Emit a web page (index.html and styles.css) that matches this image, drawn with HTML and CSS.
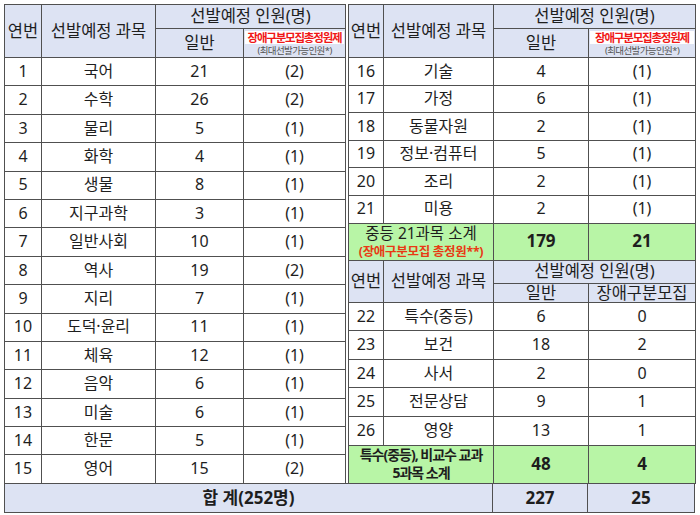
FILE: index.html
```html
<!DOCTYPE html>
<html lang="ko">
<head>
<meta charset="utf-8">
<link rel="stylesheet" href="styles.css">
</head>
<body>
<div class="sheet">
  <div class="halves">
    <table class="t left">
      <colgroup><col class="c1"><col class="c2"><col class="c3"><col class="c4"></colgroup>
      <tr class="h1">
        <th rowspan="2">연번</th><th rowspan="2">선발예정 과목</th><th colspan="2">선발예정 인원(명)</th>
      </tr>
      <tr class="h2">
        <th>일반</th>
        <th class="red-head"><span class="rh1">장애구분모집총정원제</span><span class="rh2">(최대선발가능인원*)</span></th>
      </tr>
      <tr><td>1</td><td>국어</td><td>21</td><td>(2)</td></tr>
      <tr><td>2</td><td>수학</td><td>26</td><td>(2)</td></tr>
      <tr><td>3</td><td>물리</td><td>5</td><td>(1)</td></tr>
      <tr><td>4</td><td>화학</td><td>4</td><td>(1)</td></tr>
      <tr><td>5</td><td>생물</td><td>8</td><td>(1)</td></tr>
      <tr><td>6</td><td>지구과학</td><td>3</td><td>(1)</td></tr>
      <tr><td>7</td><td>일반사회</td><td>10</td><td>(1)</td></tr>
      <tr><td>8</td><td>역사</td><td>19</td><td>(2)</td></tr>
      <tr><td>9</td><td>지리</td><td>7</td><td>(1)</td></tr>
      <tr><td>10</td><td>도덕·윤리</td><td>11</td><td>(1)</td></tr>
      <tr><td>11</td><td>체육</td><td>12</td><td>(1)</td></tr>
      <tr><td>12</td><td>음악</td><td>6</td><td>(1)</td></tr>
      <tr><td>13</td><td>미술</td><td>6</td><td>(1)</td></tr>
      <tr><td>14</td><td>한문</td><td>5</td><td>(1)</td></tr>
      <tr><td>15</td><td>영어</td><td>15</td><td>(2)</td></tr>
    </table>
    <table class="t right">
      <colgroup><col class="d1"><col class="d2"><col class="d3"><col class="d4"></colgroup>
      <tr class="h1">
        <th rowspan="2">연번</th><th rowspan="2">선발예정 과목</th><th colspan="2">선발예정 인원(명)</th>
      </tr>
      <tr class="h2">
        <th>일반</th>
        <th class="red-head"><span class="rh1">장애구분모집총정원제</span><span class="rh2">(최대선발가능인원*)</span></th>
      </tr>
      <tr class="ra"><td>16</td><td>기술</td><td>4</td><td>(1)</td></tr>
      <tr class="ra"><td>17</td><td>가정</td><td>6</td><td>(1)</td></tr>
      <tr class="ra"><td>18</td><td>동물자원</td><td>2</td><td>(1)</td></tr>
      <tr class="ra"><td>19</td><td>정보·컴퓨터</td><td>5</td><td>(1)</td></tr>
      <tr class="ra"><td>20</td><td>조리</td><td>2</td><td>(1)</td></tr>
      <tr class="ra"><td>21</td><td>미용</td><td>2</td><td>(1)</td></tr>
      <tr class="green g1">
        <td colspan="2"><span class="g1a">중등 21과목 소계</span><span class="g1b">(장애구분모집 총정원**)</span></td>
        <td class="bold">179</td><td class="bold">21</td>
      </tr>
      <tr class="h3">
        <th rowspan="2">연번</th><th rowspan="2">선발예정 과목</th><th colspan="2">선발예정 인원(명)</th>
      </tr>
      <tr class="h4">
        <th>일반</th><th>장애구분모집</th>
      </tr>
      <tr class="rb"><td>22</td><td>특수(중등)</td><td>6</td><td>0</td></tr>
      <tr class="rb"><td>23</td><td>보건</td><td>18</td><td>2</td></tr>
      <tr class="rb"><td>24</td><td>사서</td><td>2</td><td>0</td></tr>
      <tr class="rb"><td>25</td><td>전문상담</td><td>9</td><td>1</td></tr>
      <tr class="rb"><td>26</td><td>영양</td><td>13</td><td>1</td></tr>
      <tr class="green g2">
        <td colspan="2"><span class="g2a">특수(중등), 비교수 교과</span><span class="g2a">5과목 소계</span></td>
        <td class="bold">48</td><td class="bold">4</td>
      </tr>
    </table>
  </div>
  <table class="t total">
    <colgroup><col class="e1"><col class="e2"><col class="e3"></colgroup>
    <tr><td>합 계(252명)</td><td>227</td><td>25</td></tr>
  </table>
</div>
</body>
</html>
```
FILE: styles.css
```css
html, body {
  margin: 0;
  padding: 0;
  background: #ffffff;
}
body {
  font-family: "Noto Sans", "Noto Sans CJK KR", sans-serif;
  color: #1e1e1e;
}
.sheet {
  padding: 4px 0 0 4px;
  width: 690px;
}
.halves {
  display: flex;
  gap: 2px;
  align-items: flex-start;
}
.t {
  border-collapse: collapse;
  table-layout: fixed;
  border: 1px solid #333;
}
.t th, .t td {
  border: 1px solid #505050;
  padding: 0;
  text-align: center;
  vertical-align: middle;
  font-size: 16px;
  line-height: 1.1;
  font-weight: normal;
  white-space: nowrap;
}
.t th {
  background: #dde3f3;
  font-size: 16.5px;
}
.left { width: 341px; }
.right { width: 347px; }
.c1 { width: 37px; }
.c2 { width: 114px; }
.c3 { width: 88px; }
.c4 { width: 102px; }
.d1 { width: 35px; }
.d2 { width: 110px; }
.d3 { width: 95px; }
.d4 { width: 107px; }
.h1 th { height: 23px; }
.h2 th { height: 28px; }
.left tr td { height: 27.4px; }
.ra td { height: 26.6px; }
.rb td { height: 27.6px; }
.t .red-head {
  background: #dde3f3;
  line-height: 1;
  overflow: hidden;
}
.rh1, .rh2 { display: block; }
.rh1 {
  color: #f01818;
  background: #ffffff;
  font-weight: bold;
  font-size: 11.5px;
  line-height: 13px;
  letter-spacing: -1.2px;
  margin: 0 1px;
}
.rh2 {
  color: #555;
  font-size: 9.5px;
  line-height: 11px;
  letter-spacing: -0.6px;
  margin-top: 1px;
}
.t .green td {
  background: #b8f5a6;
}
.t td.bold {
  font-weight: bold;
  font-size: 17px;
}
.g1 td { height: 36px; }
.g1a, .g1b { display: block; }
.g1a { font-size: 15.5px; font-weight: normal; line-height: 19px; }
.g1b {
  color: #e83a14;
  font-weight: bold;
  font-size: 12.5px;
  line-height: 17px;
  letter-spacing: -0.3px;
}
.h3 th { height: 22px; }
.h4 th { height: 18px; line-height: 17px; }
.g2 td { height: 37px; }
.g2a {
  display: block;
  font-weight: bold;
  font-size: 14px;
  letter-spacing: -1px;
  line-height: 18px;
}
.total { width: 690px; margin-top: -1px; }
.e1 { width: 488px; }
.e2 { width: 95px; }
.e3 { width: 107px; }
.t.total td {
  background: #dde3f3;
  height: 28px;
  font-weight: bold;
  font-size: 17px;
}
```
